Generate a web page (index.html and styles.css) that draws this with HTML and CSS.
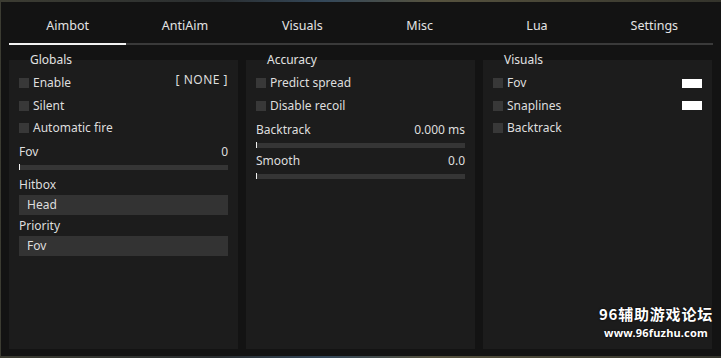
FILE: index.html
```html
<!DOCTYPE html>
<html>
<head>
    <title>Menu</title>
    <link rel="stylesheet" href="styles.css">
</head>
<body>
<div class="window">
    <div class="tabs">
        <div class="tab active">Aimbot</div>
        <div class="tab">AntiAim</div>
        <div class="tab">Visuals</div>
        <div class="tab">Misc</div>
        <div class="tab">Lua</div>
        <div class="tab">Settings</div>
    </div>

    <div class="panels">
        <div class="panel">
            <div class="group-title">Globals</div>
            <div class="row first">
                <span class="check"></span><span class="label">Enable</span>
                <span class="bind">[ NONE ]</span>
            </div>
            <div class="row">
                <span class="check"></span><span class="label">Silent</span>
            </div>
            <div class="row">
                <span class="check"></span><span class="label">Automatic fire</span>
            </div>
            <div class="slider-head fov-head"><span>Fov</span><span>0</span></div>
            <div class="slider"><span class="knob"></span></div>
            <div class="field-label hitbox-label">Hitbox</div>
            <div class="combo">Head</div>
            <div class="field-label">Priority</div>
            <div class="combo">Fov</div>
        </div>

        <div class="panel">
            <div class="group-title">Accuracy</div>
            <div class="row first">
                <span class="check"></span><span class="label">Predict spread</span>
            </div>
            <div class="row">
                <span class="check"></span><span class="label">Disable recoil</span>
            </div>
            <div class="slider-head"><span>Backtrack</span><span>0.000 ms</span></div>
            <div class="slider"><span class="knob"></span></div>
            <div class="slider-head"><span>Smooth</span><span>0.0</span></div>
            <div class="slider"><span class="knob"></span></div>
        </div>

        <div class="panel">
            <div class="group-title">Visuals</div>
            <div class="row first">
                <span class="check"></span><span class="label">Fov</span>
                <span class="swatch"></span>
            </div>
            <div class="row">
                <span class="check"></span><span class="label">Snaplines</span>
                <span class="swatch"></span>
            </div>
            <div class="row">
                <span class="check"></span><span class="label">Backtrack</span>
            </div>
        </div>
    </div>

    <div class="watermark">
        <div class="wm-title">96辅助游戏论坛</div>
        <div class="wm-url">www.96fuzhu.com</div>
    </div>
</div>
</body>
</html>
```

FILE: styles.css
```css
body {
    margin: 0;
    width: 721px;
    height: 358px;
    overflow: hidden;
    background: linear-gradient(90deg, #3c3c32, #2a2e30 30%, #34485a 45%, #56523e 60%, #34342c);
    font-family: 'Noto Sans', 'DejaVu Sans', sans-serif;
    color: #dedede;
}
.window {
    position: relative;
    margin: 2px 0 0 1px;
    width: 720px;
    height: 354px;
    background-color: #131313;
}
.tabs {
    display: flex;
    margin: 0 8px 0 8px;
    width: 704px;
}
.tab {
    flex: 1;
    height: 35px;
    padding-top: 6px;
    display: flex;
    align-items: center;
    justify-content: center;
    font-size: 12.5px;
    color: #e4e4e4;
    border-bottom: 2px solid #3a3a3a;
}
.tab.active {
    border-bottom-color: #f2f2f2;
}
.panels {
    display: flex;
    gap: 8px;
    margin: 15px 0 0 8px;
}
.panel {
    width: 209px;
    height: 289px;
    padding: 0 10px;
    background-color: #1c1c1c;
    font-size: 12px;
}
.group-title {
    margin: -7px 0 0 11px;
    height: 14px;
    line-height: 14px;
    color: #e2e2e2;
}
.row {
    display: flex;
    align-items: center;
    height: 22.5px;
}
.row.first {
    margin-top: 5px;
}
.check {
    width: 10px;
    height: 10px;
    background-color: #383838;
    margin-right: 4px;
}
.label {
    flex: 1;
    line-height: 14px;
}
.bind {
    margin-top: -7px;
    letter-spacing: 0.5px;
}
.swatch {
    width: 20px;
    height: 9px;
    background-color: #ffffff;
}
.slider-head {
    display: flex;
    justify-content: space-between;
    height: 16px;
    line-height: 16px;
    margin-top: 5px;
}
.fov-head {
    margin-top: 4px;
}
.slider {
    position: relative;
    height: 5px;
    margin-top: 5px;
    background-color: #353535;
}
.knob {
    position: absolute;
    left: 0;
    top: -1px;
    width: 1px;
    height: 6px;
    background-color: #f0f0f0;
}
.field-label {
    height: 16px;
    line-height: 16px;
    margin-top: 3px;
}
.hitbox-label {
    margin-top: 7px;
}
.combo {
    height: 20px;
    line-height: 20px;
    margin-top: 2px;
    padding-left: 8px;
    background-color: #333333;
}
.watermark {
    position: absolute;
    right: 8px;
    bottom: 17px;
    text-align: right;
    color: #ffffff;
    font-weight: bold;
    text-shadow: 0 0 2px #000;
}
.wm-title {
    font-family: 'Noto Sans CJK SC', sans-serif;
    font-size: 15px;
    line-height: 16px;
    letter-spacing: 0.8px;
}
.wm-url {
    margin-top: 5px;
    margin-right: 5px;
    font-family: 'Noto Sans', sans-serif;
    font-size: 11px;
    line-height: 12px;
    letter-spacing: 0.2px;
}
```
